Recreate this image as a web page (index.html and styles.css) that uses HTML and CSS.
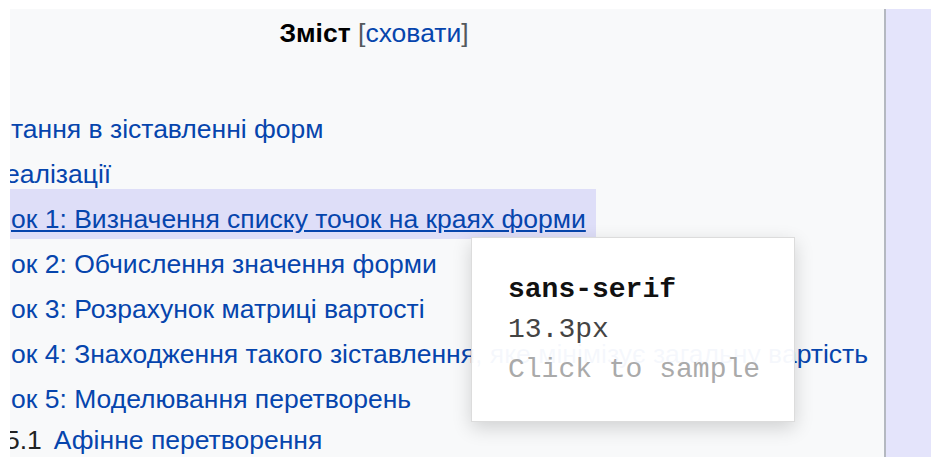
FILE: index.html
```html
<!DOCTYPE html>
<html lang="uk">
<head>
<meta charset="utf-8">
<title>Зміст</title>
<link rel="stylesheet" href="styles.css">
</head>
<body>
<div class="frame">
  <div class="toc">
    <div class="toc-title"><b>Зміст</b> <span class="toggle">[<a href="#">сховати</a>]</span></div>
    <ul class="toc-list">
      <li><a href="#">тання в зіставленні форм</a></li>
      <li class="cut"><a href="#">еалізації</a></li>
      <li><a href="#" class="is-hover">ок 1: Визначення списку точок на краях форми</a></li>
      <li><a href="#">ок 2: Обчислення значення форми</a></li>
      <li><a href="#">ок 3: Розрахунок матриці вартості</a></li>
      <li><a href="#">ок 4: Знаходження такого зіставлення, яке мінімізує загальну вартість</a></li>
      <li><a href="#">ок 5: Моделювання перетворень</a></li>
      <li class="cut sub"><a href="#"><span class="tocnumber">5.1</span>Афінне перетворення</a></li>
    </ul>
  </div>
  <div class="side"></div>
</div>
<div class="sampler">
  <div class="sampler-family">sans-serif</div>
  <div class="sampler-size">13.3px</div>
  <div class="sampler-hint">Click to sample</div>
</div>
</body>
</html>
```
FILE: styles.css
```css
html, body {
  margin: 0;
  padding: 0;
  background: #fff;
  overflow: hidden;
}

body {
  width: 931px;
  height: 457px;
  font-family: "Liberation Sans", Arial, sans-serif;
  font-size: 26.5px;
  color: #202122;
}

a {
  color: #0645ad;
  text-decoration: none;
}

.frame {
  display: flex;
  height: 448px;
  padding: 9px 0 0 10px;
}

.toc {
  width: 874px;
  flex: none;
  background: #f8f9fa;
  border-right: 2px solid #b4b8c0;
  overflow: hidden;
}

.side {
  flex: 1;
  background: #e4e4fb;
}

.toc-title {
  padding: 9px 146px 0 0;
  line-height: 30px;
  text-align: center;
  white-space: nowrap;
}

.toc-title b {
  color: #000;
}

.toggle {
  color: #54595d;
}

.toc-list {
  list-style: none;
  margin: 59px 0 0;
  padding: 0 0 0 1px;
  line-height: 45px;
  white-space: nowrap;
}

.toc-list .cut {
  margin-left: -6px;
}

.toc-list .sub {
  margin-top: -4px;
}

/* hovered entry */
.is-hover {
  display: inline-block;
  margin: -8px 0 0 -1px;
  padding: 10px 10px 0 1px;
  line-height: 40px;
  background: #dedef8;
  text-decoration: underline;
}

.tocnumber {
  color: #202122;
  padding-right: 12px;
}

/* font sampler popup */
.sampler {
  position: absolute;
  left: 471px;
  top: 237px;
  width: 286px;
  padding: 32px 0 31px 36px;
  background: rgba(255, 255, 255, 0.96);
  border: 1px solid #dcdcdc;
  box-shadow: 0 6px 18px rgba(0, 0, 0, 0.16);
  font-family: "Liberation Mono", "Courier New", monospace;
  font-size: 28px;
  line-height: 40px;
  white-space: nowrap;
}

.sampler-family {
  font-weight: bold;
  color: #111;
}

.sampler-size {
  color: #444;
}

.sampler-hint {
  color: #aaa;
}
```
